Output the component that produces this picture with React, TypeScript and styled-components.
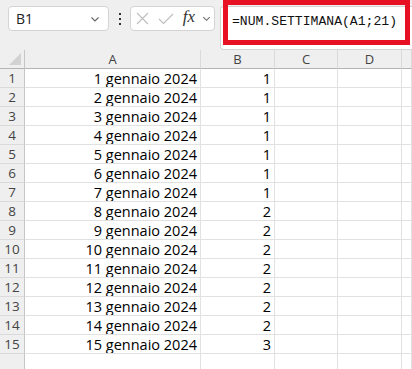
import React from 'react';
import styled, { createGlobalStyle } from 'styled-components';

const GlobalStyle = createGlobalStyle`
  html, body {
    margin: 0;
    padding: 0;
    background: #efefef;
    overflow: hidden;
  }
  body {
    font-family: "Open Sans", "Liberation Sans", sans-serif;
  }
`;

const Page = styled.div`
  width: 412px;
  height: 369px;
  display: flex;
  flex-direction: column;
  background: #efefef;
  overflow: hidden;
`;

const Toolbar = styled.div`
  position: relative;
  display: flex;
  align-items: flex-start;
  height: 59px;
  padding: 6px 0 0 8px;
  box-sizing: border-box;
`;

const Box = styled.div<{ $width: number }>`
  display: flex;
  align-items: center;
  width: ${p => p.$width}px;
  height: 25px;
  box-sizing: border-box;
  background: #fff;
  border: 1px solid #d4d4d4;
  border-radius: 4px;
`;

const NameText = styled.span`
  flex: 1;
  padding-left: 7px;
  font-family: "Open Sans", sans-serif;
  font-size: 14px;
  color: #222;
`;

const Dots = styled.div`
  width: 21px;
  display: flex;
  justify-content: center;
  padding-top: 7px;
`;

const IconSlot = styled.span<{ $w: number }>`
  display: flex;
  justify-content: center;
  align-items: center;
  width: ${p => p.$w}px;
`;

const Fx = styled.span`
  font-family: "Liberation Serif", "DejaVu Serif", serif;
  font-style: italic;
  font-size: 17px;
  color: #333;
  margin-top: -3px;
`;

const FormulaBox = styled.div`
  margin-left: 5px;
  flex: 1;
  height: 44px;
  background: #fff;
  border: 1px solid #d4d4d4;
  border-right: none;
  border-radius: 4px 0 0 4px;
  box-sizing: border-box;
`;

// red annotation drawn over the formula bar
const Highlight = styled.div`
  position: absolute;
  left: 223px;
  top: 0;
  width: 187px;
  height: 45px;
  box-sizing: border-box;
  border: 5px solid #e81123;
  display: flex;
  align-items: center;
  padding-left: 4px;
  padding-bottom: 3px;
`;

const FormulaText = styled.span`
  font-family: "Liberation Mono", "DejaVu Sans Mono", monospace;
  font-size: 13.1px;
  color: #111;
`;

const Sheet = styled.div`
  display: grid;
  grid-template-columns: 25px 176px 74px 63px 64px 1fr;
  grid-auto-rows: 19px;
`;

const Corner = styled.div`
  display: flex;
  align-items: flex-end;
  justify-content: flex-end;
  padding: 0 3px 3px 0;
  border-right: 1px solid #c6c6c6;
  border-bottom: 1px solid #b4b4b4;
`;

const ColHead = styled.div`
  display: flex;
  align-items: center;
  justify-content: center;
  font-size: 13px;
  color: #444;
  border-right: 1px solid #dadada;
  border-bottom: 1px solid #b4b4b4;
`;

const RowHead = styled.div`
  display: flex;
  align-items: center;
  justify-content: center;
  font-size: 13.5px;
  color: #444;
  border-right: 1px solid #c6c6c6;
  border-bottom: 1px solid #dadada;
`;

const Cell = styled.div`
  display: flex;
  align-items: center;
  justify-content: flex-end;
  padding-right: 3px;
  background: #fff;
  font-size: 14.5px;
  color: #000;
  border-right: 1px solid #e1e1e1;
  border-bottom: 1px solid #e1e1e1;
  white-space: nowrap;
  overflow: hidden;
`;

const Chevron = ({ size = 12 }: { size?: number }) => (
  <svg width={size} height={size} viewBox="0 0 12 12" fill="none" stroke="#666" strokeWidth="1.1">
    <path d="M2.5 4.5 L6 8 L9.5 4.5" />
  </svg>
);

const weeks = [1, 1, 1, 1, 1, 1, 1, 2, 2, 2, 2, 2, 2, 2, 3];
const cols = ['A', 'B', 'C', 'D', ''];

export default function App() {
  return (
    <Page>
      <GlobalStyle />
      <Toolbar>
        <Box $width={101}>
          <NameText>B1</NameText>
          <IconSlot $w={26}><Chevron /></IconSlot>
        </Box>
        <Dots>
          <svg width="4" height="12" viewBox="0 0 4 12" fill="#333">
            <rect x="1" y="0" width="2" height="2" />
            <rect x="1" y="5" width="2" height="2" />
            <rect x="1" y="10" width="2" height="2" />
          </svg>
        </Dots>
        <Box $width={85}>
          <IconSlot $w={22}>
            <svg width="13" height="13" viewBox="0 0 13 13" stroke="#bdbdbd" strokeWidth="1.1">
              <path d="M1 1 L12 12 M12 1 L1 12" />
            </svg>
          </IconSlot>
          <IconSlot $w={26}>
            <svg width="16" height="12" viewBox="0 0 16 12" fill="none" stroke="#bdbdbd" strokeWidth="1.1">
              <path d="M1 6 L5.5 10.5 L15 1" />
            </svg>
          </IconSlot>
          <IconSlot $w={20}><Fx>fx</Fx></IconSlot>
          <IconSlot $w={14}><Chevron size={11} /></IconSlot>
        </Box>
        <FormulaBox />
        <Highlight>
          <FormulaText>=NUM.SETTIMANA(A1;21)</FormulaText>
        </Highlight>
      </Toolbar>
      <Sheet>
        <Corner>
          <svg width="12" height="12" viewBox="0 0 12 12">
            <path d="M12 0 L12 12 L0 12 Z" fill="#d2d2d2" />
          </svg>
        </Corner>
        {cols.map((c, i) => (
          <ColHead key={i}>{c}</ColHead>
        ))}
        {weeks.concat([0]).map((w, i) => (
          <React.Fragment key={i}>
            <RowHead>{i < 15 ? i + 1 : ''}</RowHead>
            <Cell>{i < 15 ? `${i + 1} gennaio 2024` : ''}</Cell>
            <Cell>{i < 15 ? w : ''}</Cell>
            <Cell />
            <Cell />
            <Cell />
          </React.Fragment>
        ))}
      </Sheet>
    </Page>
  );
}
